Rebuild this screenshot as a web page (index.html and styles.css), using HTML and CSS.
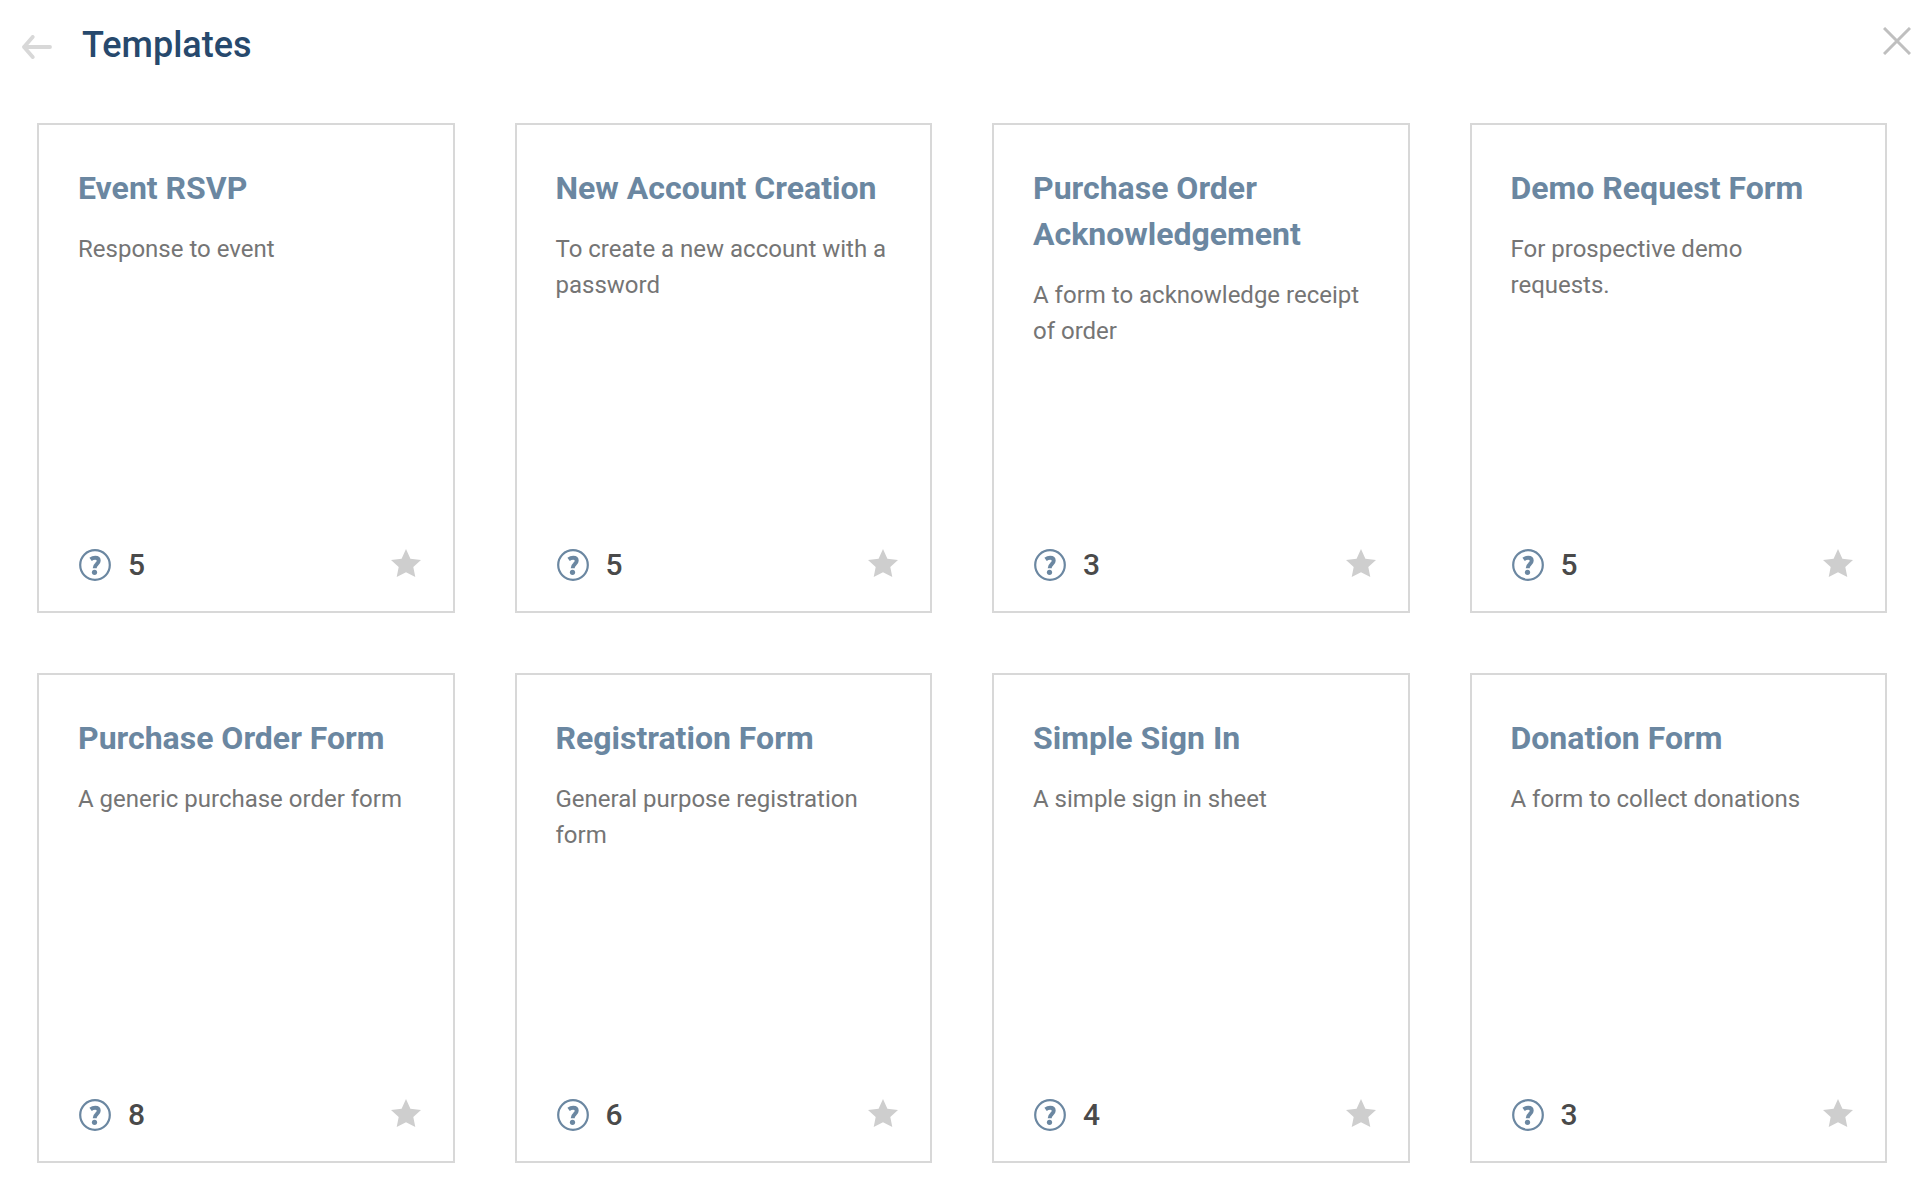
FILE: index.html
```html
<!DOCTYPE html>
<html lang="en">
<head>
<meta charset="utf-8">
<meta name="viewport" content="width=device-width, initial-scale=1">
<title>Templates</title>
<link rel="stylesheet" href="styles.css">
</head>
<body>
<svg class="sprite" aria-hidden="true">
  <symbol id="icon-question" viewBox="0 0 32 32">
    <circle cx="16" cy="16" r="14.8" fill="none" stroke="currentColor" stroke-width="2.2"/>
    <path d="M11.600 10.300c1.500-1.100 3-1.500 4.600-1.500 2.300 0 3.500 1.100 3.500 2.900 0 1.900-1.100 2.800-2.200 3.800-1.200 1-1.800 1.800-1.800 3.700" fill="none" stroke="currentColor" stroke-width="4"/>
    <circle cx="15.500" cy="23.300" r="2.600" fill="currentColor"/>
  </symbol>
  <symbol id="icon-star" viewBox="0 0 30 28">
    <path d="M15 0l4.400 9.700L30 10.900l-7.700 7 2 10.100L15 23.200 5.700 28l2-10.100L0 10.900l10.600-1.200z" fill="currentColor"/>
  </symbol>
</svg>

<header class="header">
  <button class="icon-button back" type="button" aria-label="Back">
    <svg width="30" height="24" viewBox="0 0 30 24" fill="none" stroke="currentColor" stroke-width="3.800" stroke-linecap="round" stroke-linejoin="round"><path d="M10.700 1.900L2 12l8.700 10.100M2 12h26"/></svg>
  </button>
  <h1 class="title">Templates</h1>
  <button class="icon-button close" type="button" aria-label="Close">
    <svg width="28" height="28" viewBox="0 0 28 28" fill="none" stroke="currentColor" stroke-width="3"><path d="M1 1l26 26M27 1L1 27"/></svg>
  </button>
</header>

<main class="grid">
  <article class="card">
    <h2 class="name">Event RSVP</h2>
    <p class="description">Response to event</p>
    <footer class="footer"><svg class="question"><use href="#icon-question"/></svg><span class="count">5</span><button class="icon-button star" type="button" aria-label="Favorite"><svg width="30" height="28"><use href="#icon-star"/></svg></button></footer>
  </article>
  <article class="card">
    <h2 class="name">New Account Creation</h2>
    <p class="description">To create a new account with a password</p>
    <footer class="footer"><svg class="question"><use href="#icon-question"/></svg><span class="count">5</span><button class="icon-button star" type="button" aria-label="Favorite"><svg width="30" height="28"><use href="#icon-star"/></svg></button></footer>
  </article>
  <article class="card">
    <h2 class="name">Purchase Order Acknowledgement</h2>
    <p class="description">A form to acknowledge receipt of order</p>
    <footer class="footer"><svg class="question"><use href="#icon-question"/></svg><span class="count">3</span><button class="icon-button star" type="button" aria-label="Favorite"><svg width="30" height="28"><use href="#icon-star"/></svg></button></footer>
  </article>
  <article class="card">
    <h2 class="name">Demo Request Form</h2>
    <p class="description">For prospective demo requests.</p>
    <footer class="footer"><svg class="question"><use href="#icon-question"/></svg><span class="count">5</span><button class="icon-button star" type="button" aria-label="Favorite"><svg width="30" height="28"><use href="#icon-star"/></svg></button></footer>
  </article>
  <article class="card">
    <h2 class="name">Purchase Order Form</h2>
    <p class="description">A generic purchase order form</p>
    <footer class="footer"><svg class="question"><use href="#icon-question"/></svg><span class="count">8</span><button class="icon-button star" type="button" aria-label="Favorite"><svg width="30" height="28"><use href="#icon-star"/></svg></button></footer>
  </article>
  <article class="card">
    <h2 class="name">Registration Form</h2>
    <p class="description">General purpose registration form</p>
    <footer class="footer"><svg class="question"><use href="#icon-question"/></svg><span class="count">6</span><button class="icon-button star" type="button" aria-label="Favorite"><svg width="30" height="28"><use href="#icon-star"/></svg></button></footer>
  </article>
  <article class="card">
    <h2 class="name">Simple Sign In</h2>
    <p class="description">A simple sign in sheet</p>
    <footer class="footer"><svg class="question"><use href="#icon-question"/></svg><span class="count">4</span><button class="icon-button star" type="button" aria-label="Favorite"><svg width="30" height="28"><use href="#icon-star"/></svg></button></footer>
  </article>
  <article class="card">
    <h2 class="name">Donation Form</h2>
    <p class="description">A form to collect donations</p>
    <footer class="footer"><svg class="question"><use href="#icon-question"/></svg><span class="count">3</span><button class="icon-button star" type="button" aria-label="Favorite"><svg width="30" height="28"><use href="#icon-star"/></svg></button></footer>
  </article>
</main>
</body>
</html>
```
FILE: styles.css
```css
* {
  box-sizing: border-box;
}

body {
  margin: 0;
  background: #fff;
  color: #757575;
  font-family: Roboto, "Liberation Sans", sans-serif;
}

h1, h2, p {
  margin: 0;
}

.sprite {
  display: none;
}

.icon-button {
  display: flex;
  padding: 0;
  border: 0;
  background: none;
  cursor: pointer;
}

.header {
  display: flex;
  align-items: center;
  padding: 20px 5px 0 22px;
}

.back {
  padding-top: 4px;
  color: #d8d8d8;
}

.title {
  margin-left: 30px;
  color: #27496d;
  font-size: 36px;
  font-weight: 500;
  line-height: 50px;
}

.close {
  margin-left: auto;
  padding-bottom: 8px;
  color: #bfbfbf;
}

.grid {
  display: grid;
  grid-template-columns: repeat(4, minmax(0, 1fr));
  grid-auto-rows: minmax(490px, auto);
  gap: 60px;
  padding: 53px 29px 17px 37px;
}

.card {
  display: flex;
  flex-direction: column;
  border: 2px solid #d8d8d8;
  padding-top: 40px;
}

.name {
  padding: 0 40px 0 39px;
  color: #6b87a1;
  font-size: 32px;
  font-weight: 700;
  line-height: 46px;
}

.description {
  margin-top: 20px;
  padding: 0 40px 0 39px;
  font-size: 24px;
  line-height: 36px;
}

.footer {
  display: flex;
  align-items: center;
  margin-top: auto;
  padding: 20px 32px 28px 40px;
}

.question {
  width: 32px;
  height: 32px;
  color: #6b87a1;
}

.count {
  margin-left: 17px;
  color: #4a4a4a;
  font-size: 30px;
  font-weight: 500;
  line-height: 36px;
}

.star {
  margin-left: auto;
  padding-bottom: 4px;
  color: #cecece;
}
```
